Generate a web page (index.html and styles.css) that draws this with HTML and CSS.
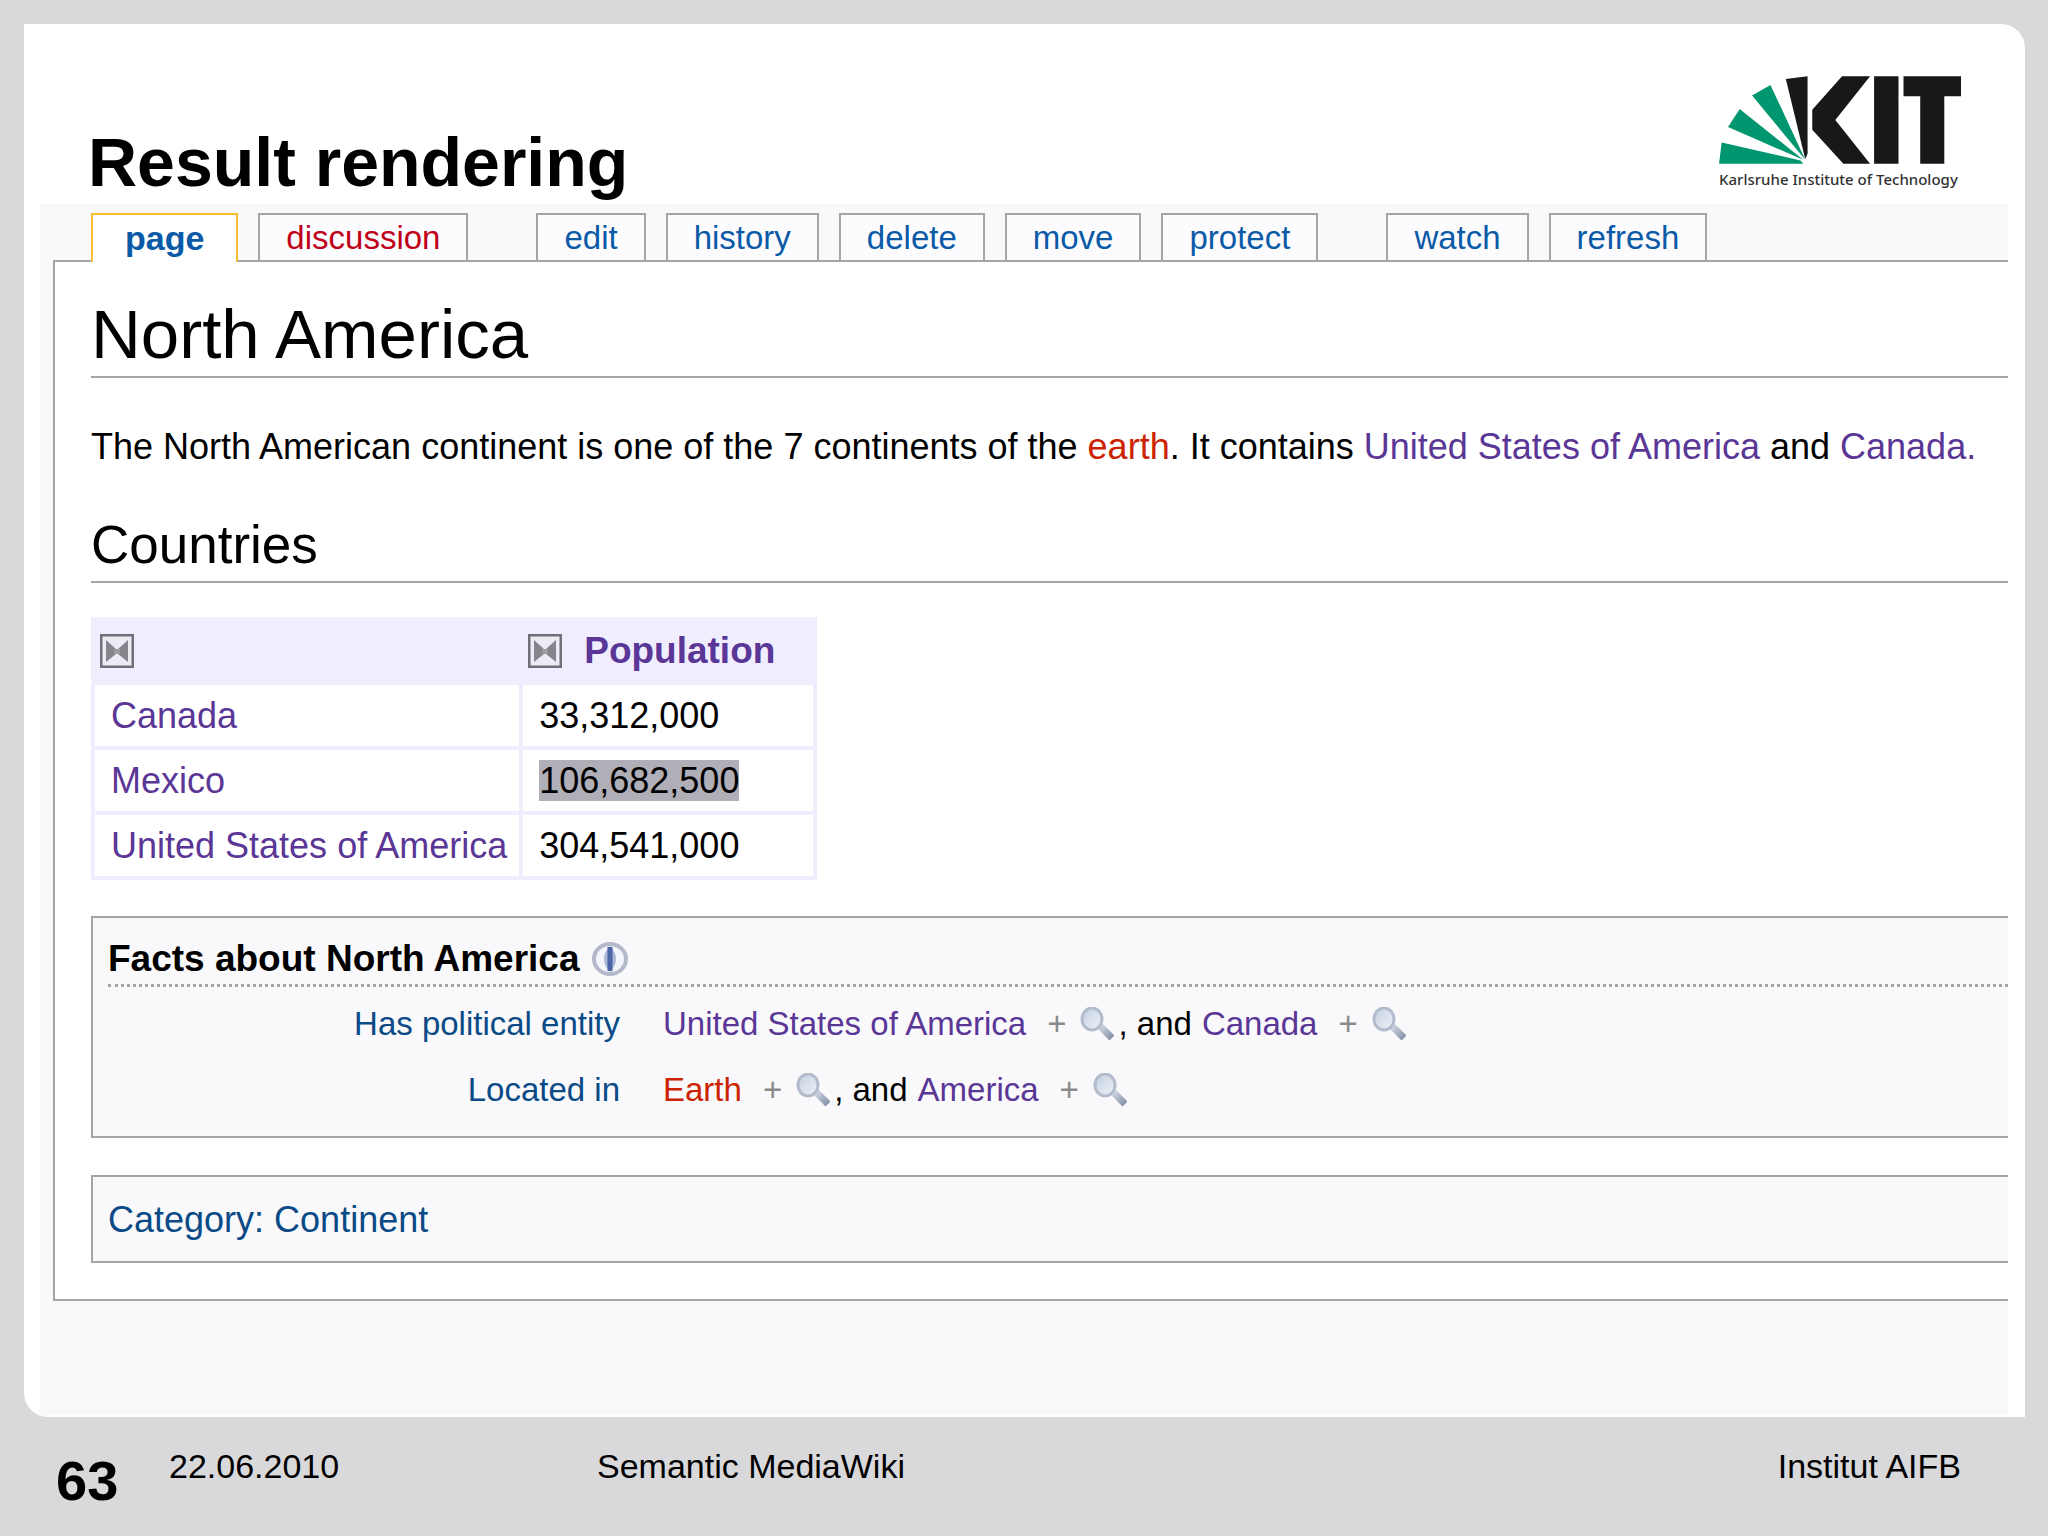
FILE: index.html
```html
<!DOCTYPE html>
<html lang="en">
<head>
<meta charset="utf-8">
<title>Result rendering</title>
<link rel="stylesheet" href="styles.css">
</head>
<body>
<svg class="defs" aria-hidden="true">
  <defs>
    <linearGradient id="glass" x1="0" y1="0" x2="1" y2="1">
      <stop offset="0" stop-color="#c3d0de"/>
      <stop offset="1" stop-color="#eef2fa"/>
    </linearGradient>
    <linearGradient id="handle" x1="0" y1="0" x2="1" y2="1">
      <stop offset="0" stop-color="#d3d8e4"/>
      <stop offset="1" stop-color="#8593a8"/>
    </linearGradient>
    <symbol id="magnifier" viewBox="0 0 34 34">
      <path d="M20 19 L32 31" stroke="url(#handle)" stroke-width="7"/>
      <ellipse cx="12" cy="12" rx="10" ry="11" fill="url(#glass)" stroke="#b3bccd" stroke-width="3"/>
    </symbol>
    <symbol id="sort" viewBox="0 0 34 34">
      <rect x="1" y="1" width="32" height="32" fill="#ececf4" stroke="#6f6f77" stroke-width="3"/>
      <path d="M6 6 L16 15 V20 L6 28 Z M28 6 L18 15 V20 L28 28 Z" fill="#85858b"/>
      <path d="M14 15 H20 V20 H14 Z" fill="#9c9ca2"/>
    </symbol>
  </defs>
</svg>
<main class="slide">
  <header class="slide-head">
    <h1 class="slide-title">Result rendering</h1>
    <div class="logo">
      <svg class="logo-mark" viewBox="118 108 724 262" role="img" aria-label="KIT">
        <g fill="#00966f">
          <path d="M126 306 L362 360 L370 370 H118 Z"/>
          <path d="M180 206 L370 358 L145 260 Z"/>
          <path d="M272 134 L376 358 L217 166 Z"/>
        </g>
        <g fill="#1a171b">
          <path d="M318 116 L383 108 V340 L376 356 Z"/>
          <path d="M486 108 H570 L466 239 L570 370 H490 L397 268 V208 Z"/>
          <path d="M582 108 H655 V370 H582 Z"/>
          <path d="M670 108 H842 V168 H792 V370 H720 V168 H670 Z"/>
        </g>
      </svg>
      <span class="logo-name">Karlsruhe Institute of Technology</span>
    </div>
  </header>

  <div class="wiki">
    <nav class="tabs" aria-label="Page actions">
      <a class="tab tab-active" href="#">page</a>
      <a class="tab tab-new" href="#">discussion</a>
      <a class="tab tab-group" href="#">edit</a>
      <a class="tab" href="#">history</a>
      <a class="tab" href="#">delete</a>
      <a class="tab" href="#">move</a>
      <a class="tab" href="#">protect</a>
      <a class="tab tab-group" href="#">watch</a>
      <a class="tab" href="#">refresh</a>
    </nav>
    <article class="content">
      <h2 class="page-title">North America</h2>
      <p class="intro">The North American continent is one of the 7 continents of the <a class="new" href="#">earth</a>. It contains <a href="#">United States of America</a> and <a href="#">Canada.</a></p>
      <h3 class="section-title">Countries</h3>
      <table class="countries">
        <thead>
          <tr>
            <th><div class="head-cell"><button class="sort" aria-label="Sort by country"><svg><use href="#sort"/></svg></button></div></th>
            <th><div class="head-cell"><button class="sort" aria-label="Sort by population"><svg><use href="#sort"/></svg></button><a href="#">Population</a></div></th>
          </tr>
        </thead>
        <tbody>
          <tr><td><a href="#">Canada</a></td><td>33,312,000</td></tr>
          <tr><td><a href="#">Mexico</a></td><td><mark>106,682,500</mark></td></tr>
          <tr><td><a href="#">United States of America</a></td><td>304,541,000</td></tr>
        </tbody>
      </table>

      <section class="box facts">
        <h4 class="facts-title">Facts about North America
          <svg class="eye" viewBox="0 0 36 34" aria-hidden="true">
            <ellipse cx="18" cy="17" rx="16" ry="15" fill="#f4f5fa" stroke="#b3b8ca" stroke-width="4"/>
            <path d="M18 4 Q6 17 18 30 Q30 17 18 4 Z" fill="#a9b6d6"/>
            <path d="M18 5 V29" stroke="#4a66a6" stroke-width="5"/>
          </svg>
        </h4>
        <dl class="fact-list">
          <dt><a href="#">Has political entity</a></dt>
          <dd><a href="#">United States of America</a><span class="plus">+</span><svg class="lens"><use href="#magnifier"/></svg><span class="sep">, and</span><a href="#">Canada</a><span class="plus">+</span><svg class="lens"><use href="#magnifier"/></svg></dd>
          <dt><a href="#">Located in</a></dt>
          <dd><a class="new" href="#">Earth</a><span class="plus">+</span><svg class="lens"><use href="#magnifier"/></svg><span class="sep">, and</span><a href="#">America</a><span class="plus">+</span><svg class="lens"><use href="#magnifier"/></svg></dd>
        </dl>
      </section>

      <section class="box category"><a href="#">Category</a>: <a href="#">Continent</a></section>
    </article>
  </div>
</main>
<footer class="slide-foot">
  <span class="number">63</span>
  <span class="date">22.06.2010</span>
  <span class="topic">Semantic MediaWiki</span>
  <span class="institute">Institut AIFB</span>
</footer>
</body>
</html>
```

FILE: styles.css
```css
* {
  box-sizing: border-box;
}

body {
  margin: 0;
  min-height: 100vh;
  padding: 24px 23px 0 24px;
  display: flex;
  flex-direction: column;
  background: #d9d8da;
  color: #000;
  font-family: "Liberation Sans", Arial, sans-serif;
  font-size: 36px;
  line-height: 40px;
}

a {
  color: #5a3696;
  text-decoration: none;
}

a.new {
  color: #cc2200;
}

.defs {
  position: absolute;
  width: 0;
  height: 0;
}

.slide {
  background: #fff;
  border-radius: 0 24px 0 24px;
  padding: 0 17px 2px 16px;
}

.slide-head {
  height: 180px;
  display: flex;
  justify-content: space-between;
  align-items: flex-start;
  padding: 52px 47px 0 48px;
}

.slide-title {
  margin: 0;
  padding-top: 48px;
  font-size: 68px;
  line-height: 76px;
}

.logo {
  display: flex;
  flex-direction: column;
}

.logo-mark {
  width: 242px;
  height: 88px;
}

.logo-name {
  margin-top: 5px;
  width: 242px;
  color: #333;
  font-family: "Noto Sans", sans-serif;
  font-size: 15px;
  font-weight: 500;
  line-height: 20px;
  white-space: nowrap;
}

.wiki {
  background: #f9f9fb;
  padding: 9px 0 114px 13px;
}

.tabs {
  display: flex;
  gap: 20px;
  padding-left: 38px;
}

.tab {
  height: 47px;
  padding: 4px 26px 0;
  border: 2px solid #a5a5a7;
  border-bottom: 0;
  background: #fcfcfe;
  color: #0b5aa8;
  font-size: 33px;
  line-height: 38px;
}

.tab-active {
  height: 49px;
  margin-bottom: -2px;
  padding: 4px 32px 0;
  position: relative;
  border-color: #f8bd33;
  background: #fff;
  font-size: 34px;
  font-weight: bold;
}

.tab-new {
  color: #c0001a;
}

.tab-group {
  margin-left: 48px;
}

.content {
  border: 2px solid #a5a5a7;
  border-right: 0;
  background: #fff;
  padding: 32px 0 36px 36px;
}

.page-title,
.section-title {
  margin: 0;
  font-weight: normal;
  border-bottom: 2px solid #a5a5a7;
}

.page-title {
  font-size: 69px;
  line-height: 82px;
}

.intro {
  margin: 49px 0 46px;
  white-space: nowrap;
}

.section-title {
  font-size: 53px;
  line-height: 64px;
  padding-bottom: 4px;
}

.countries {
  margin-top: 34px;
  border-collapse: separate;
  border-spacing: 4px;
  background: #f0edff;
}

.countries th,
.countries td {
  height: 61px;
  padding: 0 12px 0 16px;
  text-align: left;
}

.countries th {
  height: 60px;
  padding: 0 38px 0 5px;
  font-size: 37px;
}

.countries td {
  background: #fff;
}

.countries mark {
  background: #b0afb8;
  color: inherit;
}

.head-cell {
  display: flex;
  align-items: center;
  gap: 22px;
}

.sort {
  padding: 0;
  border: 0;
  background: none;
}

.sort svg {
  display: block;
  width: 34px;
  height: 34px;
}

.box {
  border: 2px solid #a5a5a7;
  border-right: 0;
  background: #f9f9fb;
}

.facts {
  margin-top: 36px;
  padding: 21px 0 13px 15px;
}

.facts-title {
  margin: 0;
  padding-bottom: 5px;
  border-bottom: 3px dotted #a5a5a7;
  display: flex;
  align-items: center;
  gap: 12px;
  font-size: 37px;
}

.eye {
  width: 36px;
  height: 34px;
}

.fact-list {
  margin: 4px 0 0;
  display: grid;
  grid-template-columns: 512px 1fr;
  column-gap: 43px;
  font-size: 33px;
  line-height: 66px;
}

.fact-list dt {
  text-align: right;
}

.fact-list dt a,
.category,
.category a {
  color: #0a4a86;
}

.fact-list dd {
  margin: 0;
  display: flex;
  align-items: center;
}

.plus {
  margin: 0 14px 0 21px;
  color: #8a8a8a;
}

.lens {
  width: 34px;
  height: 34px;
}

.sep {
  margin: 0 10px 0 4px;
}

.category {
  margin-top: 37px;
  padding: 23px 15px 21px;
}

.slide-foot {
  display: flex;
  align-items: flex-start;
  padding: 29px 64px 0 32px;
  font-size: 34px;
}

.number {
  width: 113px;
  padding-top: 3px;
  font-size: 56px;
  font-weight: bold;
  line-height: 64px;
}

.date {
  width: 428px;
}

.topic {
  flex: 1;
}
```
